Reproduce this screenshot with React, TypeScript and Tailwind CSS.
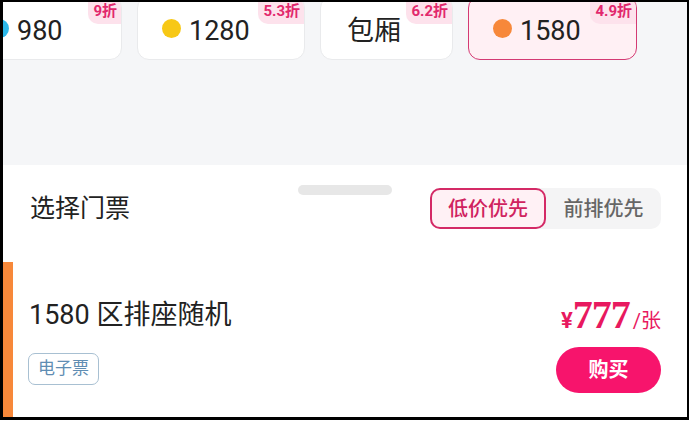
const FONT = { fontFamily: 'Roboto, "Noto Sans CJK SC", sans-serif' };

type Tab = { label: string; dot?: string; off: string; width: string; active?: boolean };

const tabs: Tab[] = [
  { label: "980", dot: "bg-[#2cb8ea]", off: "9折", width: "w-[157px]" },
  { label: "1280", dot: "bg-[#f7c816]", off: "5.3折", width: "w-[168px]" },
  { label: "包厢", off: "6.2折", width: "w-[133px]" },
  { label: "1580", dot: "bg-[#f7883a]", off: "4.9折", width: "w-[169px]", active: true },
];

const PriceTab = ({ label, dot, off, width, active }: Tab) => (
  <div
    className={`relative shrink-0 h-[64px] ${width} rounded-[12px] flex items-center gap-[8px] ${
      dot ? "pl-[24px]" : "pl-[26px]"
    } ${active ? "bg-[#fff0f4] border-[1.5px] border-[#d43a73]" : "bg-white border border-[#e9eaec]"}`}>
    {dot && <span className={`w-[19px] h-[19px] rounded-full ${dot}`} />}
    <span className="text-[27px] leading-none text-[#222] mt-[6px]">{label}</span>
    <span className="absolute top-0 right-0 h-[27px] pl-[5px] pr-[4px] pt-[7px] rounded-bl-[10px] rounded-tr-[11px] bg-[#fde2ec] text-[#e2286d] text-[15px] leading-none font-bold">
      {off}
    </span>
  </div>
);

export default function App() {
  return (
    <div className="w-[690px] h-[424px] bg-white overflow-hidden" style={FONT}>
      <div className="w-[689px] h-[420px] border-l-[3px] border-t-2 border-r-2 border-b-[3px] border-black overflow-hidden flex flex-col">
        {/* price zones */}
        <div className="h-[163px] shrink-0 bg-[#f5f6f8]">
          <div className="flex gap-[15px] ml-[-38px] mt-[-6px]">
            {tabs.map((t) => (
              <PriceTab key={t.label} {...t} />
            ))}
          </div>
        </div>

        {/* sheet */}
        <div className="relative flex-1 bg-white flex flex-col">
          <div className="absolute top-[20px] left-1/2 -translate-x-1/2 w-[94px] h-[10px] rounded-full bg-[#e7e7e7]" />

          <div className="flex items-center justify-between pt-[23px] pl-[27px] pr-[26px]">
            <span className="text-[25px] text-[#222]">选择门票</span>
            <div className="flex h-[41px] w-[231px] rounded-[10px] bg-[#f4f4f5]">
              <span className="w-[116px] h-full rounded-[10px] border-2 border-[#d42a66] bg-[#fff1f5] flex items-center justify-center text-[20px] font-medium text-[#d0235f]">
                低价优先
              </span>
              <span className="flex-1 flex items-center justify-center text-[20px] font-medium text-[#666]">
                前排优先
              </span>
            </div>
          </div>

          <div className="flex flex-1 mt-[33px]">
            <div className="w-[10px] bg-[#f7883a]" />
            <div className="flex-1 flex justify-between pl-[16px] pr-[26px]">
              <div className="flex flex-col items-start pt-[36px]">
                <span className="text-[27px] leading-[34px] text-[#222]">1580 区排座随机</span>
                <span className="mt-[21px] ml-[-1px] h-[32px] px-[9px] rounded-[7px] border border-[#a8c0d2] flex items-center text-[17px] text-[#5f8db3]">
                  电子票
                </span>
              </div>
              <div className="flex flex-col items-end pt-[33px]">
                <div className="flex items-baseline text-[#e8195f] h-[40px]">
                  <span className="text-[22px] font-bold">¥</span>
                  <span className="text-[40px] leading-none font-bold tracking-[-1px]" style={{ fontFamily: '"Liberation Serif", serif' }}>
                    777
                  </span>
                  <span className="text-[20px] ml-[3px]">/张</span>
                </div>
                <button className="mt-[12px] w-[105px] h-[46px] rounded-full bg-[#f7146c] text-white text-[20px] font-bold">
                  购买
                </button>
              </div>
            </div>
          </div>
        </div>
      </div>
    </div>
  );
}
